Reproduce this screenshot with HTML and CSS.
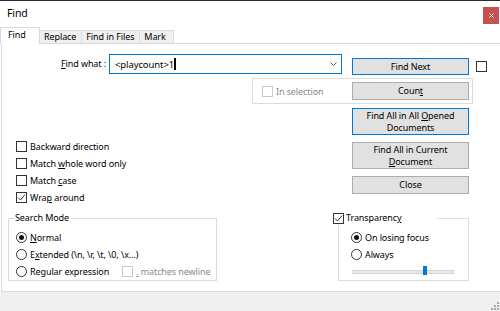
FILE: index.html
```html
<!DOCTYPE html>
<html lang="en">

<head>
    <meta charset="UTF-8">
    <title>Find</title>
    <link rel="stylesheet" href="styles.css">
</head>

<body>
    <div class="dialog">
        <div class="titlebar">
            <span class="title">Find</span>
            <button class="close" aria-label="Close">
                <svg width="5" height="5" viewBox="0 0 5 5"><path d="M0.5 0.5 L4.5 4.5 M4.5 0.5 L0.5 4.5" stroke="#fff" stroke-width="1" fill="none" /></svg>
            </button>
        </div>

        <div class="tabs">
            <div class="tab active">Find</div>
            <div class="tab">Replace</div>
            <div class="tab">Find in Files</div>
            <div class="tab">Mark</div>
        </div>

        <div class="panel">
            <div class="find-row">
                <label class="find-label"><u>F</u>ind what :</label>
                <div class="combo">
                    <span class="combo-text">&lt;playcount&gt;1</span><span class="caret"></span>
                    <svg class="chevron" width="7" height="4" viewBox="0 0 7 4"><path d="M0.5 0.5 L3.5 3.5 L6.5 0.5" stroke="#606060" fill="none" /></svg>
                </div>
                <button class="btn default find-next">Find Next</button>
                <span class="check side-check"></span>
            </div>

            <div class="selection-group">
                <span class="check disabled"></span>
                <span class="muted sel-label">In selection</span>
                <button class="btn count">Coun<u>t</u></button>
            </div>

            <div class="middle">
                <div class="options">
                    <div class="opt"><span class="check"></span><span>Backward direction</span></div>
                    <div class="opt"><span class="check"></span><span>Match <u>w</u>hole word only</span></div>
                    <div class="opt"><span class="check"></span><span>Match <u>c</u>ase</span></div>
                    <div class="opt">
                        <span class="check checked"><svg width="9" height="9" viewBox="0 0 9 9"><path d="M1 4.5 L3.5 7 L8 1.5" stroke="#333" fill="none" /></svg></span>
                        <span>Wra<u>p</u> around</span>
                    </div>
                </div>
                <div class="actions">
                    <button class="btn default tall">Find All in All <u>O</u>pened<br>Documents</button>
                    <button class="btn tall">Find All in Current<br><u>D</u>ocument</button>
                    <button class="btn">Close</button>
                </div>
            </div>

            <div class="bottom">
                <fieldset class="group mode">
                    <legend>Search Mode</legend>
                    <div class="opt"><span class="radio on"></span><span><u>N</u>ormal</span></div>
                    <div class="opt"><span class="radio"></span><span>E<u>x</u>tended (\n, \r, \t, \0, \x...)</span></div>
                    <div class="opt">
                        <span class="radio"></span><span>Re<u>g</u>ular expression</span>
                        <span class="check disabled newline-check"></span><span class="muted"><u>.</u> matches newline</span>
                    </div>
                </fieldset>

                <fieldset class="group transparency">
                    <legend>
                        <span class="check checked"><svg width="9" height="9" viewBox="0 0 9 9"><path d="M1 4.5 L3.5 7 L8 1.5" stroke="#333" fill="none" /></svg></span>
                        <span>Transparenc<u>y</u></span>
                    </legend>
                    <div class="opt"><span class="radio on"></span><span>On losing focus</span></div>
                    <div class="opt"><span class="radio"></span><span>Always</span></div>
                    <div class="slider">
                        <div class="track"><span class="thumb"></span></div>
                    </div>
                </fieldset>
            </div>
        </div>

        <div class="footer">
            <svg class="grip" width="9" height="9" viewBox="0 0 9 9">
                <rect x="7" y="1" width="2" height="2" fill="#a8a8a8" />
                <rect x="4" y="4" width="2" height="2" fill="#a8a8a8" />
                <rect x="7" y="4" width="2" height="2" fill="#a8a8a8" />
                <rect x="1" y="7" width="2" height="2" fill="#a8a8a8" />
                <rect x="4" y="7" width="2" height="2" fill="#a8a8a8" />
                <rect x="7" y="7" width="2" height="2" fill="#a8a8a8" />
            </svg>
        </div>
    </div>
</body>

</html>
```

FILE: styles.css
```css
* {
    box-sizing: border-box;
}

body {
    margin: 0;
    font-family: 'Noto Sans', 'Liberation Sans', sans-serif;
    font-size: 9px;
    letter-spacing: -0.1px;
    color: #000;
}

u {
    text-decoration-thickness: 1px;
    text-underline-offset: 1px;
}

.dialog {
    width: 500px;
    height: 311px;
    border-top: 1px solid #2b2b2b;
    background: #fff;
    display: flex;
    flex-direction: column;
    overflow: hidden;
}

.titlebar {
    height: 26px;
    display: flex;
    justify-content: space-between;
    align-items: flex-start;
}

.title {
    font-size: 10.5px;
    margin: 5px 0 0 7px;
}

.close {
    width: 16px;
    height: 17px;
    margin: 6px 1px 0 0;
    padding: 0;
    border: 0;
    background: #c75050;
    display: flex;
    align-items: center;
    justify-content: center;
}

/* tab strip */
.tabs {
    height: 16px;
    display: flex;
    align-items: flex-end;
    position: relative;
    z-index: 1;
}

.tab {
    min-width: 35px;
    height: 13px;
    padding: 0 5px 0 4px;
    line-height: 12px;
    border: 1px solid #d9d9d9;
    border-bottom: 0;
    background: #f0f0f0;
    margin-left: -1px;
}

.tab.active {
    width: 40px;
    height: 17px;
    margin-bottom: -1px;
    margin-left: 0;
    padding: 0 7px;
    line-height: 14px;
    background: #fff;
}

.panel {
    flex: 0 0 249px;
    margin-left: 1px;
    border: 1px solid #d9d9d9;
    border-right: 0;
    background: #fff;
}

.footer {
    flex: 1;
    background: #f0f0f0;
    display: flex;
    justify-content: flex-end;
    align-items: flex-end;
    padding: 0 1px 1px 0;
}

/* controls */
.btn {
    font: inherit;
    letter-spacing: inherit;
    color: #000;
    background: #e1e1e1;
    border: 1px solid #adadad;
    padding: 0;
    height: 18px;
    line-height: 11.5px;
}

.btn.default {
    border-color: #0078d7;
}

.btn.tall {
    height: 27px;
}

.check,
.radio {
    flex: none;
    width: 11px;
    height: 11px;
    border: 1px solid #333;
    background: #fff;
    display: inline-flex;
    align-items: center;
    justify-content: center;
}

.check.disabled {
    border-color: #c8c8c8;
}

.radio {
    border-radius: 50%;
}

.radio.on::after {
    content: '';
    width: 5px;
    height: 5px;
    border-radius: 50%;
    background: #111;
}

.muted {
    color: #8a8a8a;
}

.opt {
    height: 17px;
    display: flex;
    align-items: center;
    gap: 3px;
    white-space: nowrap;
}

/* find what row */
.find-row {
    margin-top: 10px;
    display: flex;
    align-items: flex-start;
}

.find-label {
    width: 107px;
    padding-right: 3px;
    text-align: right;
    line-height: 20px;
}

.combo {
    width: 233px;
    height: 20px;
    border: 1px solid #0078d7;
    display: flex;
    align-items: center;
    padding: 0 4px 0 5px;
}

.combo-text {
    font-size: 9.5px;
}

.caret {
    width: 2px;
    height: 12px;
    background: #000;
}

.chevron {
    margin-left: auto;
}

.find-next {
    width: 117px;
    height: 17px;
    margin: 4px 0 0 10px;
}

.side-check {
    margin: 7px 0 0 7px;
}

.selection-group {
    width: 221px;
    height: 26px;
    margin: 3px 0 0 250px;
    border: 1px solid #dcdcdc;
    display: flex;
    align-items: center;
    padding: 0 3px 0 9px;
}

.sel-label {
    margin-left: 3px;
}

.count {
    width: 117px;
    margin-left: auto;
}

/* options and action buttons */
.middle {
    display: grid;
    grid-template-columns: 350px 117px;
}

.options {
    padding: 34px 0 0 14px;
}

.actions {
    padding-top: 4px;
    display: flex;
    flex-direction: column;
    gap: 7px;
}

/* group boxes */
.bottom {
    margin-top: 5px;
    padding-left: 6px;
    display: flex;
    align-items: flex-start;
}

.group {
    margin: 0;
    border: 1px solid #dcdcdc;
    padding: 4px 0 0 0;
}

.group legend {
    padding: 0;
    line-height: 14px;
}

.mode {
    width: 209px;
    padding-left: 7px;
}

.mode legend {
    margin-left: -1px;
    padding-right: 2px;
}

.newline-check {
    margin-left: 10px;
}

.transparency {
    width: 131px;
    margin-left: 121px;
    padding-left: 12px;
}

.transparency legend {
    width: 104px;
    margin-left: -18px;
    display: flex;
    align-items: center;
    gap: 2px;
}

.slider {
    height: 17px;
    display: flex;
    align-items: center;
}

.track {
    width: 102px;
    height: 4px;
    margin-left: 1px;
    background: #e7e7e7;
    border: 1px solid #d6d6d6;
    position: relative;
}

.thumb {
    position: absolute;
    left: 70px;
    top: -5px;
    width: 4px;
    height: 9px;
    background: #0078d7;
}
```
